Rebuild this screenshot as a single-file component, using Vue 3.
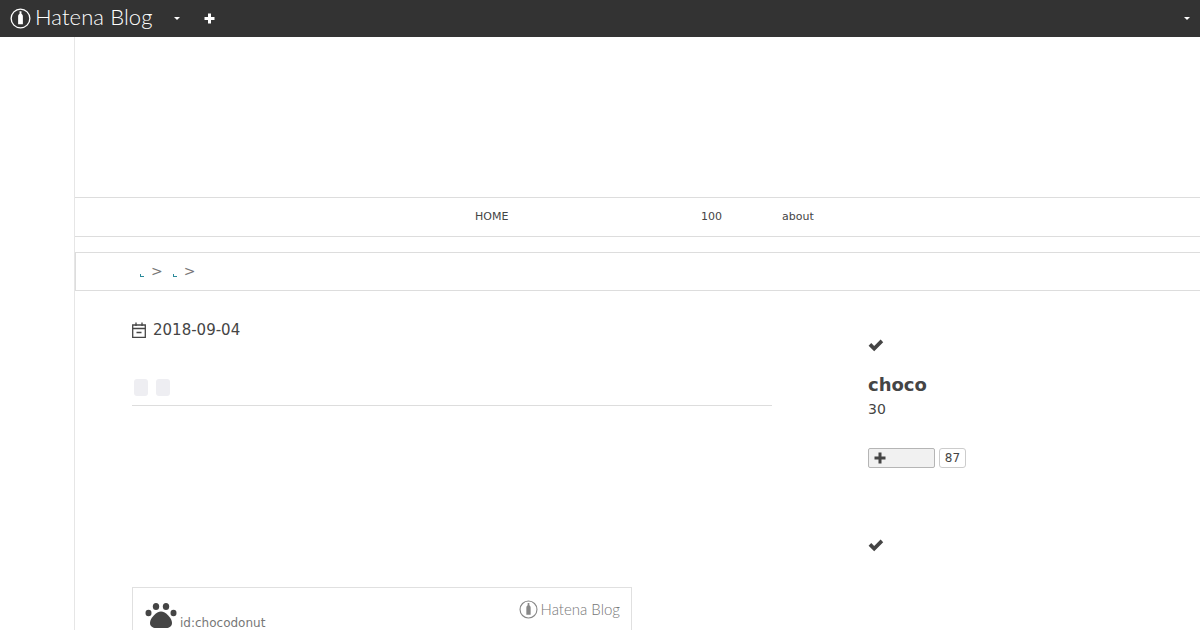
<script setup>
const navItems = [
  { label: 'HOME', width: 226 },
  { label: '100', width: 81 },
  { label: 'about', width: 40 },
]
</script>

<template>
  <div class="page">
    <header class="topbar">
      <div class="logo">
        <svg class="logo-mark" viewBox="0 0 22 22" width="21" height="21">
          <circle cx="11" cy="11" r="9.8" fill="none" stroke="#fff" stroke-width="1.4" />
          <path d="M10 3.500h2v2.500c1 .7 1.500 1.600 1.500 2.800v8.200h-5V8.800c0-1.200.5-2.100 1.500-2.800z" fill="#fff" />
        </svg>
        <span class="logo-text">Hatena Blog</span>
      </div>
      <span class="caret first"></span>
      <svg class="plus" viewBox="0 0 11 11" width="11" height="11">
        <path d="M4 0.500h3v3.500h3.500v3H7v3.500H4V7H0.500V4H4z" fill="#fff" />
      </svg>
      <span class="caret last"></span>
    </header>

    <div class="wrapper">
      <div class="blog-header"></div>
      <nav class="nav">
        <a v-for="item in navItems" :key="item.label" class="nav-item" :style="{ width: item.width + 'px' }">{{ item.label }}</a>
      </nav>
      <div class="crumbs">
        <span class="dot"></span><span class="gt">&gt;</span>
        <span class="dot second"></span><span class="gt">&gt;</span>
      </div>

      <div class="columns">
        <main class="article">
          <div class="date">
            <svg viewBox="0 0 14 16" width="14" height="16" class="cal">
              <path d="M.7 3h12.600v12.300H.7zM.7 6.500h12.600M4 .5v3.500M10 .5v3.500M4.500 10.500h5" fill="none" stroke="#454545" stroke-width="1.300" />
            </svg>
            <span>2018-09-04</span>
          </div>
          <div class="title">
            <span class="tofu"></span><span class="tofu"></span>
          </div>
          <div class="card">
            <div class="card-left">
              <svg class="paw" viewBox="0 0 32 26" width="32" height="26">
                <ellipse cx="3.500" cy="11" rx="3" ry="3.300" fill="#454545" />
                <ellipse cx="11" cy="4.500" rx="3.200" ry="3.600" fill="#454545" />
                <ellipse cx="21" cy="4.500" rx="3.200" ry="3.600" fill="#454545" />
                <ellipse cx="28.500" cy="11" rx="3" ry="3.300" fill="#454545" />
                <path d="M16 9.500c4.500 0 11 6.500 11 11.500 0 3.500-3 5-5.500 5h-11C8 26 5 24.500 5 21c0-5 6.500-11.500 11-11.500z" fill="#454545" />
              </svg>
              <span class="card-id">id:chocodonut</span>
            </div>
            <div class="card-logo">
              <svg viewBox="0 0 22 22" width="19" height="19">
                <circle cx="11" cy="11" r="9.800" fill="none" stroke="#888" stroke-width="1.300" />
                <path d="M10 3.500h2v2.500c1 .7 1.500 1.600 1.500 2.800v8.200h-5V8.800c0-1.200.5-2.100 1.500-2.800z" fill="#888" />
              </svg>
              <span>Hatena Blog</span>
            </div>
          </div>
        </main>

        <aside class="side">
          <section class="module">
            <svg class="check" viewBox="0 0 16 13" width="16" height="13">
              <path d="M.6 6.700 3.200 4.100 6.200 7 12.600.6 15.200 3.200 6.200 12.300z" fill="#454545" />
            </svg>
            <div class="name">choco</div>
            <div class="age">30</div>
            <div class="follow">
              <button class="btn">
                <svg viewBox="0 0 12 12" width="12" height="12">
                  <path d="M4.500.5h3v4h4v3h-4v4h-3v-4h-4v-3h4z" fill="#454545" />
                </svg>
              </button>
              <span class="count">87</span>
            </div>
          </section>
          <section class="module">
            <svg class="check" viewBox="0 0 16 13" width="16" height="13">
              <path d="M.6 6.700 3.200 4.100 6.200 7 12.600.6 15.200 3.200 6.200 12.300z" fill="#454545" />
            </svg>
          </section>
        </aside>
      </div>
    </div>
  </div>
</template>

<style>
html, body { margin: 0; background: #fff; }
</style>

<style scoped>
.page {
  width: 1200px;
  height: 630px;
  overflow: hidden;
  background: #fff;
  color: #454545;
  font-family: "DejaVu Sans", sans-serif;
}
.topbar {
  height: 37px;
  background: #333;
  display: flex;
  align-items: center;
  padding: 0 9px;
  box-sizing: border-box;
}
.logo { display: flex; align-items: center; gap: 4px; color: #fff; width: 165px; }
.logo-text {
  font-family: Lato, sans-serif;
  font-weight: 300;
  font-size: 22px;
  letter-spacing: 0.1px;
  line-height: 32px;
  margin-top: -3px;
  white-space: nowrap;
}
.logo-mark { flex: none; margin-left: 1px; }
.caret {
  width: 0;
  height: 0;
  border-left: 3px solid transparent;
  border-right: 3px solid transparent;
  border-top: 3px solid #fff;
}
.caret.first { margin-left: 0; margin-right: 24px; }
.caret.last { margin-left: auto; margin-right: 1px; }
.wrapper { margin-left: 74px; border-left: 1px solid #e6e6e6; }
.blog-header { height: 160px; }
.nav {
  border-top: 1px solid #ddd;
  border-bottom: 1px solid #ddd;
  display: flex;
  align-items: center;
  padding-left: 400px;
  padding-bottom: 2px;
  height: 36px;
  font-size: 11px;
}
.nav-item { flex: none; white-space: nowrap; }
.crumbs {
  margin-top: 15px;
  height: 37px;
  border: 1px solid #ddd;
  border-right: none;
  display: flex;
  align-items: center;
  padding-left: 64px;
  color: #777;
  font-size: 14px;
}
.dot {
  width: 4px;
  height: 3px;
  margin: 7px 7px 0 0;
  border-left: 1px solid #2a8a9a;
  border-bottom: 1px solid #2a8a9a;
  box-sizing: border-box;
}
.dot.second { margin-left: 10px; margin-right: 7px; }
.gt { position: relative; top: -1px; }
.columns { display: flex; padding-left: 57px; }
.article { width: 640px; flex: none; }
.date {
  margin-top: 29px;
  display: flex;
  align-items: center;
  gap: 7px;
  font-size: 15px;
  line-height: 20px;
  height: 20px;
}
.cal { margin-top: -1px; }
.title {
  margin-top: 30px;
  border-bottom: 1px solid #ddd;
  display: flex;
  gap: 8px;
  padding-left: 2px;
  padding-top: 9px;
  height: 26px;
}
.tofu { width: 14px; height: 17px; border-radius: 3px; background: #eeeef2; }
.card {
  margin-top: 181px;
  width: 500px;
  height: 80px;
  border: 1px solid #e0e0e0;
  box-sizing: border-box;
  display: flex;
  justify-content: space-between;
  padding: 12px 11px 0 12px;
}
.card-left { display: flex; align-items: flex-start; gap: 3px; }
.paw { margin-top: 2px; }
.card-id { font-size: 12px; color: #777; margin-top: 16px; }
.card-logo {
  display: flex;
  align-items: flex-start;
  gap: 3px;
  font-family: Lato, sans-serif;
  font-weight: 300;
  font-size: 15px;
  color: #777;
  white-space: nowrap;
}
.card-logo span { line-height: 19px; }
.side { margin-left: 96px; width: 300px; }
.module { height: 200px; padding-top: 48px; box-sizing: border-box; }
.check { display: block; }
.name { font-size: 18px; font-weight: 700; line-height: 24px; margin-top: 21px; }
.age { font-size: 14px; line-height: 20px; margin-top: 2px; }
.follow { display: flex; align-items: center; gap: 4px; margin-top: 29px; }
.btn {
  width: 67px;
  height: 20px;
  padding: 0 0 0 5px;
  border: 1px solid #b5b5b5;
  border-radius: 2px;
  background: #f1f1f1;
  display: flex;
  align-items: center;
  box-sizing: border-box;
}
.count {
  width: 27px;
  height: 20px;
  border: 1px solid #ccc;
  border-radius: 3px;
  box-sizing: border-box;
  font-size: 12px;
  line-height: 18px;
  text-align: center;
}
</style>
